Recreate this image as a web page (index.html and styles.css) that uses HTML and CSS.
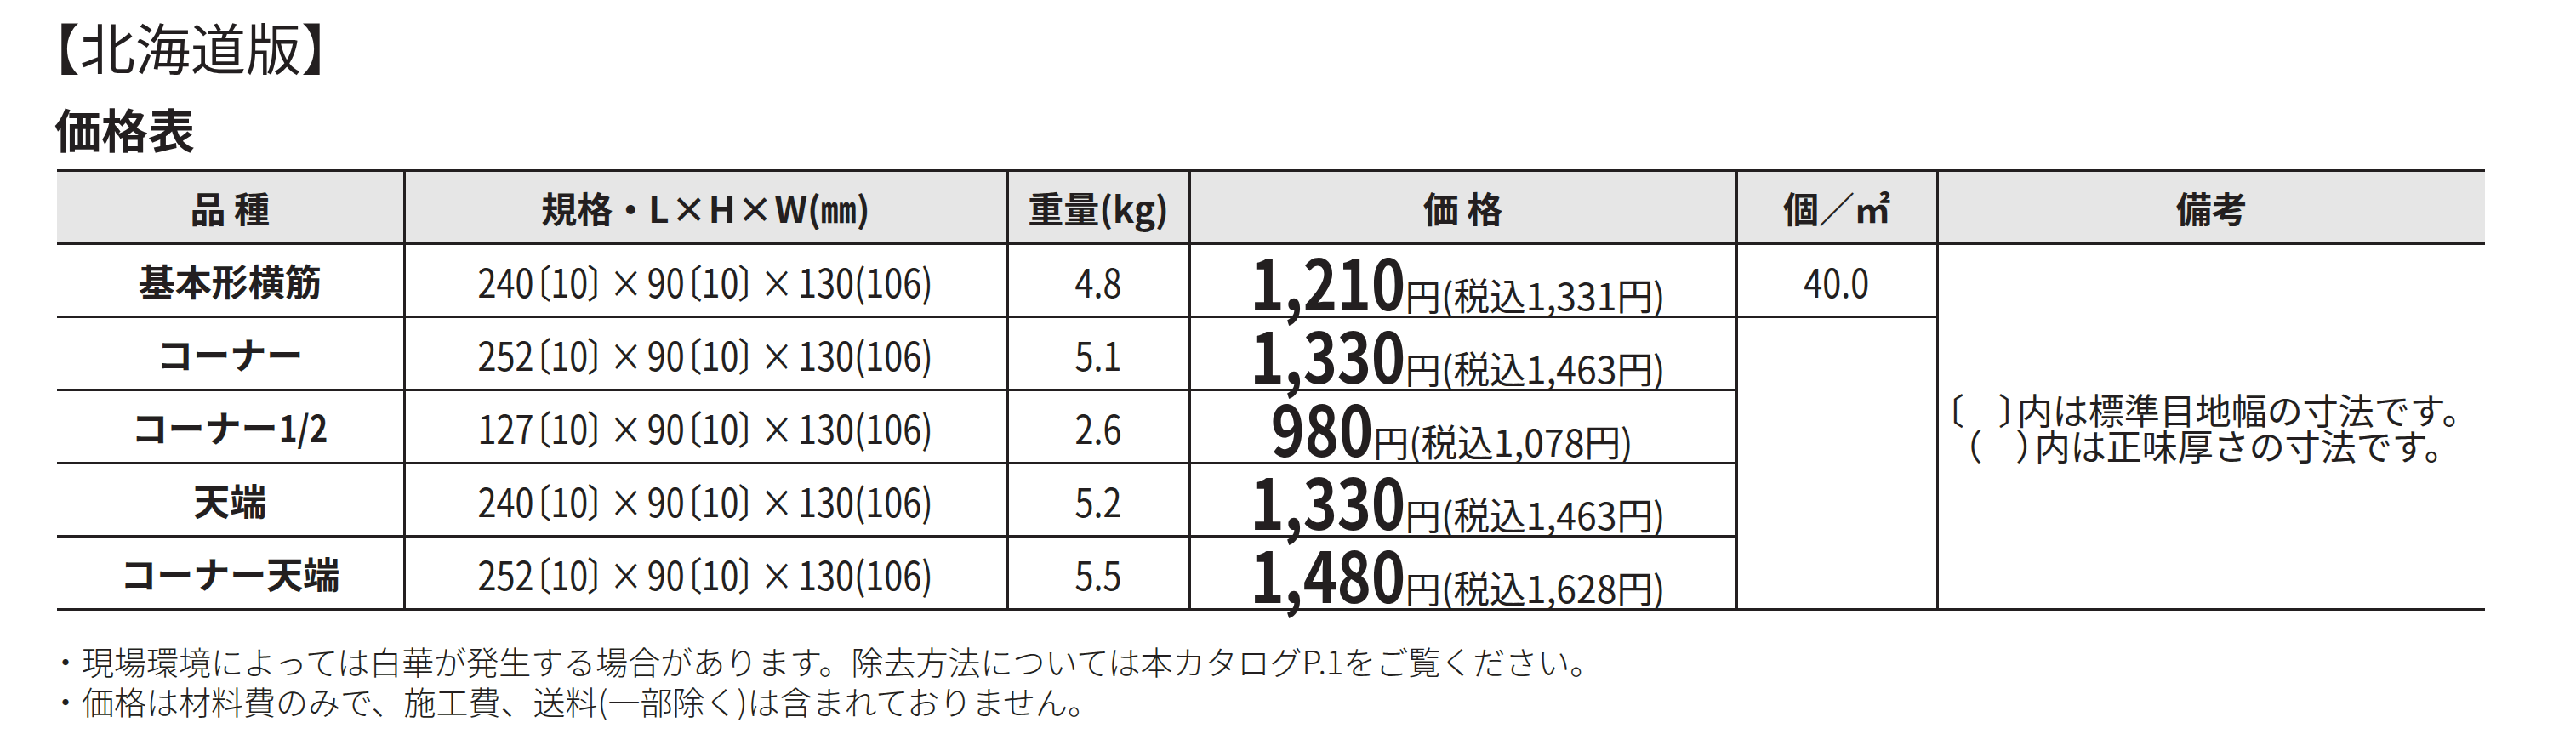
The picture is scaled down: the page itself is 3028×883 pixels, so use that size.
FILE: index.html
```html
<!DOCTYPE html>
<html lang="ja">
<head>
<meta charset="utf-8">
<title>北海道版 価格表</title>
<link rel="stylesheet" href="styles.css">
</head>
<body>
<div class="page">
  <h1 class="title">【北海道版】</h1>
  <h2 class="subtitle">価格表</h2>
  <table class="price-table">
    <colgroup>
      <col class="c-name"><col class="c-spec"><col class="c-weight"><col class="c-price"><col class="c-qty"><col class="c-note">
    </colgroup>
    <thead>
      <tr>
        <th class="first">品 種</th>
        <th>規格・L<span class="hx">×</span>H<span class="hx">×</span>W(㎜)</th>
        <th>重量(kg)</th>
        <th>価 格</th>
        <th>個／㎡</th>
        <th class="last">備考</th>
      </tr>
    </thead>
    <tbody>
      <tr>
        <td class="first name">基本形横筋</td>
        <td class="num"><span class="cond">240<span class="bk">〔</span>10<span class="bk">〕</span><span class="times">×</span>90<span class="bk">〔</span>10<span class="bk">〕</span><span class="times">×</span>130(106)</span></td>
        <td class="num"><span class="cond">4.8</span></td>
        <td class="price"><span class="big">1,210</span><span class="yen">円</span><span class="tax">(税込1,331円)</span></td>
        <td class="num"><span class="cond">40.0</span></td>
        <td class="last note" rowspan="5"><span class="bk">〔</span>　<span class="bk">〕</span>内は標準目地幅の寸法です。<br><span class="bk">（</span>　<span class="bk">）</span>内は正味厚さの寸法です。</td>
      </tr>
      <tr>
        <td class="first name">コーナー</td>
        <td class="num"><span class="cond">252<span class="bk">〔</span>10<span class="bk">〕</span><span class="times">×</span>90<span class="bk">〔</span>10<span class="bk">〕</span><span class="times">×</span>130(106)</span></td>
        <td class="num"><span class="cond">5.1</span></td>
        <td class="price"><span class="big">1,330</span><span class="yen">円</span><span class="tax">(税込1,463円)</span></td>
        <td class="num" rowspan="4"></td>
      </tr>
      <tr>
        <td class="first name">コーナー<span class="frac">1/2</span></td>
        <td class="num"><span class="cond">127<span class="bk">〔</span>10<span class="bk">〕</span><span class="times">×</span>90<span class="bk">〔</span>10<span class="bk">〕</span><span class="times">×</span>130(106)</span></td>
        <td class="num"><span class="cond">2.6</span></td>
        <td class="price"><span class="big">980</span><span class="yen">円</span><span class="tax">(税込1,078円)</span></td>
      </tr>
      <tr>
        <td class="first name">天端</td>
        <td class="num"><span class="cond">240<span class="bk">〔</span>10<span class="bk">〕</span><span class="times">×</span>90<span class="bk">〔</span>10<span class="bk">〕</span><span class="times">×</span>130(106)</span></td>
        <td class="num"><span class="cond">5.2</span></td>
        <td class="price"><span class="big">1,330</span><span class="yen">円</span><span class="tax">(税込1,463円)</span></td>
      </tr>
      <tr>
        <td class="first name">コーナー天端</td>
        <td class="num"><span class="cond">252<span class="bk">〔</span>10<span class="bk">〕</span><span class="times">×</span>90<span class="bk">〔</span>10<span class="bk">〕</span><span class="times">×</span>130(106)</span></td>
        <td class="num"><span class="cond">5.5</span></td>
        <td class="price"><span class="big">1,480</span><span class="yen">円</span><span class="tax">(税込1,628円)</span></td>
      </tr>
    </tbody>
  </table>
  <div class="notes">
    <p>・現場環境によっては白華が発生する場合があります。除去方法については本カタログP.1をご覧ください。</p>
    <p>・価格は材料費のみで、施工費、送料(一部除く)は含まれておりません。</p>
  </div>
</div>
</body>
</html>
```

FILE: styles.css
```css
* {
  box-sizing: border-box;
  margin: 0;
  padding: 0;
}

html,
body {
  background: #ffffff;
}

body {
  width: 3028px;
  height: 883px;
  overflow: hidden;
  color: #231f20;
  font-family: "Noto Sans CJK JP", "Noto Sans", sans-serif;
}

.page {
  padding-top: 22px;
}

.title {
  font-size: 65px;
  line-height: 65px;
  font-weight: 400;
  padding-left: 29px;
}

.subtitle {
  font-size: 55px;
  line-height: 55px;
  font-weight: 700;
  margin-top: 36px;
  padding-left: 64px;
}

.price-table {
  margin-top: 21px;
  margin-left: 67px;
  width: 2854px;
  border-collapse: collapse;
  table-layout: fixed;
  font-family: "Noto Sans CJK JP", "Noto Sans", sans-serif;
}

.c-name { width: 408px; }
.c-spec { width: 709px; }
.c-weight { width: 214px; }
.c-price { width: 643px; }
.c-qty { width: 236px; }
.c-note { width: 644px; }

.price-table th,
.price-table td {
  border: 3px solid #231f20;
  padding: 0;
  text-align: center;
  vertical-align: middle;
  white-space: nowrap;
  line-height: 1;
}

.price-table .first {
  border-left: none;
}

.price-table .last {
  border-right: none;
}

.price-table thead tr,
.price-table tbody tr {
  height: 86px;
}

.price-table th {
  background: #e6e6e6;
  font-size: 42px;
  font-weight: 700;
}

.hx {
  margin: 0 2px;
}

.bk {
  font-feature-settings: "palt";
}

.times {
  margin: 0 6px;
}

.name {
  font-size: 43px;
  font-weight: 700;
}

.frac {
  display: inline-block;
  transform: scaleX(0.85);
  margin: 0 -4px;
}

.num {
  font-size: 46px;
  font-weight: 400;
}

.cond {
  display: inline-block;
  transform: scaleX(0.86);
}

.price {
  text-align: right;
  padding-right: 54px;
}

.price .big {
  display: inline-block;
  margin-left: -50px;
  font-size: 82px;
  font-weight: 700;
  transform: scaleX(0.83);
  transform-origin: 100% 50%;
}

.price .yen {
  font-size: 42px;
}

.price .tax {
  display: inline-block;
  margin-right: -8px;
  font-size: 44px;
  transform: scaleX(0.97);
  transform-origin: 0 50%;
}

.note {
  font-size: 42px;
  font-weight: 400;
  line-height: 52px;
}

.notes {
  margin-top: 35px;
  padding-left: 58px;
  font-size: 38px;
  line-height: 47px;
  font-weight: 300;
}
```
